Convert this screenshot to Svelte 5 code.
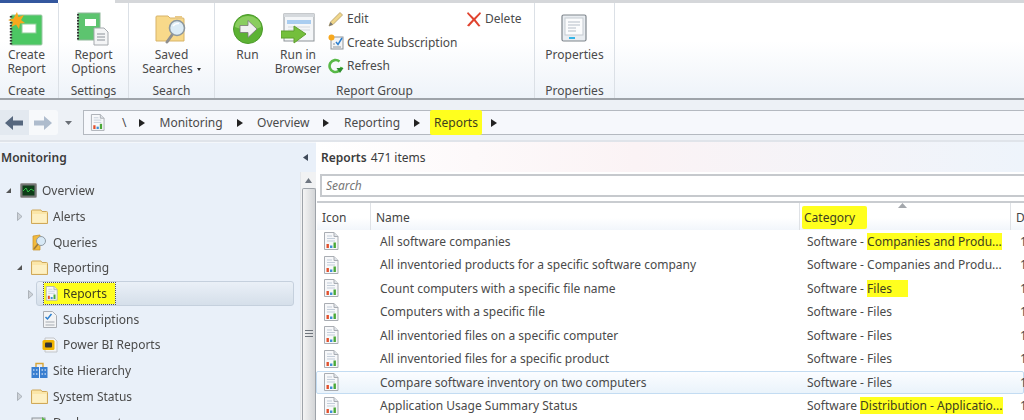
<script>
  const rows = [
    { name: 'All software companies', pre: 'Software - ', mark: 'Companies and Produ...' },
    { name: 'All inventoried products for a specific software company', pre: 'Software - Companies and Produ...' },
    { name: 'Count computers with a specific file name', pre: 'Software - ', mark: 'Files', wide: true },
    { name: 'Computers with a specific file', pre: 'Software - Files' },
    { name: 'All inventoried files on a specific computer', pre: 'Software - Files' },
    { name: 'All inventoried files for a specific product', pre: 'Software - Files' },
    { name: 'Compare software inventory on two computers', pre: 'Software - Files', hover: true },
    { name: 'Application Usage Summary Status', pre: 'Software ', mark: 'Distribution - Applicatio...' }
  ];
  const crumbs = ['Monitoring', 'Overview', 'Reporting'];
</script>

{#snippet arrowR()}
  <svg class="crumbarrow" viewBox="0 0 6 8" width="6" height="8"><path d="M0 0 L6 4 L0 8Z" fill="#222"/></svg>
{/snippet}

{#snippet reportIcon(size)}
  <svg viewBox="0 0 16 18" width={size} height={size * 18 / 16}>
    <path d="M1.5 .5 H11 L15 4.5 V17.5 H1.5Z" fill="#f7f8fa" stroke="#a9adb3"/>
    <path d="M11 .5 V4.5 H15" fill="#dfe3e8" stroke="#a9adb3"/>
    <path d="M4 4h5M4 6.5h8M4 9h8" stroke="#c3cdd9" stroke-width="1"/>
    <rect x="3.5" y="12" width="2.4" height="4" fill="#e2502c"/>
    <rect x="7" y="13.5" width="2.4" height="2.5" fill="#3f8fd6"/>
    <rect x="10.5" y="10.5" width="2.4" height="5.5" fill="#4aa838"/>
  </svg>
{/snippet}

{#snippet folder()}
  <svg viewBox="0 0 17 15" width="17" height="15">
    <path d="M.5 14.5 V2 Q.5 1 1.5 1 H10 L11 2.5 H15.5 Q16.5 2.5 16.5 3.5 V14.5Z" fill="#fbe6a8" stroke="#cfa85a"/>
    <path d="M1.5 13.5 V5 H15.5 V13.5Z" fill="#fdf0c4"/>
  </svg>
{/snippet}

{#snippet tw(dir)}
  {#if dir === 'open'}
    <svg class="tw" viewBox="0 0 7 7" width="7" height="7"><path d="M6 1 V6 H1Z" fill="#555"/></svg>
  {:else if dir === 'closed'}
    <svg class="tw" viewBox="0 0 7 9" width="7" height="9"><path d="M1.5 .5 L6 4.5 L1.5 8.5Z" fill="#cdd2d8" stroke="#9aa0a8" stroke-width=".7"/></svg>
  {:else}
    <span class="tw"></span>
  {/if}
{/snippet}

<div class="app">
  <div class="tabs">
    <div class="tab-blue"></div>
    <div class="tab-active"></div>
    <div class="tab-rest"></div>
  </div>

  <div class="ribbon">
    <section class="group g-create">
      <div class="items">
        <div class="big">
          <svg viewBox="0 0 36 34" width="36" height="34">
            <rect x="3" y="3" width="31" height="30" rx="1" fill="#4cc763" stroke="#9cc7a6"/>
            <path d="M3 4V33" stroke="#333" stroke-width="2.4" stroke-dasharray="1.5 1.5"/>
            <rect x="14" y="12" width="14" height="9" fill="#fff" stroke="#8fcf9a"/>
            <path d="M9 0 L10.5 5 L16 3 L13 8 L17 11 L12 11.5 L11 17 L8 12.5 L3.5 15 L5 10 L0 8 L5.5 6.5Z" fill="#f7a81e"/>
          </svg>
          <span class="lbl">Create<br />Report</span>
        </div>
      </div>
      <div class="glabel">Create</div>
    </section>

    <section class="group g-settings">
      <div class="items">
        <div class="big">
          <svg viewBox="0 0 32 34" width="32" height="34">
            <rect x="1" y="1" width="22" height="27" fill="#5dc46f" stroke="#8fb79a"/>
            <path d="M1 2V28" stroke="#333" stroke-width="2" stroke-dasharray="1.5 1.5"/>
            <rect x="8" y="7" width="11" height="7" fill="#fff"/>
            <path d="M17 16 H27 L31 20 V33 H17Z" fill="#f4f5f6" stroke="#a5a9ae"/>
            <path d="M20 22h8M20 25h8M20 28h8" stroke="#8b9299"/>
          </svg>
          <span class="lbl">Report<br />Options</span>
        </div>
      </div>
      <div class="glabel">Settings</div>
    </section>

    <section class="group g-search">
      <div class="items">
        <div class="big">
          <svg viewBox="0 0 34 34" width="34" height="34">
            <path d="M1 29 V5 Q1 4 2 4 H13 L15 6 H28 Q29 6 29 7 V29Z" fill="#f8d98a" stroke="#d7b368"/>
            <path d="M20 4 H27 V7 H20Z" fill="#e9c987"/>
            <path d="M17 23 L12 30" stroke="#8f8f8f" stroke-width="3" stroke-linecap="round"/>
            <circle cx="22" cy="16" r="7.5" fill="#dcecf6" stroke="#8d989f" stroke-width="1.6"/>
            <path d="M18 14 Q20 11 24 11.5" stroke="#fff" stroke-width="1.4" fill="none"/>
          </svg>
          <span class="lbl">Saved<br />Searches <i class="caret"></i></span>
        </div>
      </div>
      <div class="glabel">Search</div>
    </section>

    <section class="group g-report">
      <div class="items rg">
        <div class="big run">
          <svg viewBox="0 0 32 32" width="32" height="32">
            <circle cx="16" cy="16" r="14.5" fill="#5cb233" stroke="#4b9a2a"/>
            <path d="M3 14 A13 11 0 0 1 29 14 Q16 20 3 14Z" fill="#9ad56f" opacity=".75"/>
            <path d="M8 12.5 H16 V7.5 L25 16 L16 24.5 V19.5 H8Z" fill="#f1f1f1" stroke="#777" stroke-width=".8"/>
          </svg>
          <span class="lbl">Run</span>
        </div>
        <div class="big browser">
          <svg viewBox="0 0 34 32" width="34" height="32">
            <rect x="3" y="1" width="30" height="27" fill="#f4f6f8" stroke="#8e9499"/>
            <rect x="3" y="1" width="30" height="3" fill="#d5d9dd"/>
            <rect x="6" y="7" width="24" height="4" fill="#a9cdf0"/>
            <path d="M7 14h22M7 17h22" stroke="#d3d8de"/>
            <path d="M0 18 H13 V13 L25 21 L13 30 V25 H0Z" fill="#74bf3c" stroke="#5f9f2f"/>
          </svg>
          <span class="lbl">Run in<br />Browser</span>
        </div>
        <div class="smallcol">
          <div class="small">
            <svg viewBox="0 0 16 16" width="16" height="16"><path d="M1 15 L2.5 11 L12 1.5 L14.5 4 L5 13.5Z" fill="#f0d68a" stroke="#b19b63" stroke-width=".8"/><path d="M1 15 L2.5 11 L5 13.5Z" fill="#777"/></svg>
            <span>Edit</span>
          </div>
          <div class="small">
            <svg viewBox="0 0 16 16" width="16" height="16"><rect x="3" y="3" width="12" height="12" fill="#f3f4f5" stroke="#8e9499"/><path d="M8 8 L10 10.5 L14 4" stroke="#2b7fd0" stroke-width="1.5" fill="none"/><path d="M5 10h2M5 13h8" stroke="#8e9499"/><circle cx="3.5" cy="3.5" r="3" fill="#f7a81e"/></svg>
            <span>Create Subscription</span>
          </div>
          <div class="small">
            <svg viewBox="0 0 16 16" width="16" height="16"><path d="M13.5 9 A6 6 0 1 1 11.5 3.5" stroke="#58b947" stroke-width="2.6" fill="none"/><path d="M15.5 8 L8.5 8 L12 13Z" fill="#2f8f2f" transform="translate(0 2)"/></svg>
            <span>Refresh</span>
          </div>
        </div>
        <div class="small delete">
          <svg viewBox="0 0 16 16" width="16" height="16"><path d="M2 1 L8 7 L14 1 L15 2.5 L9.5 8.5 L14.5 15 L12.5 15.5 L8 10 L3 15.5 L1 14.5 L6.5 8.5 L1 2.5Z" fill="#e0432f"/></svg>
          <span>Delete</span>
        </div>
      </div>
      <div class="glabel">Report Group</div>
    </section>

    <section class="group g-props">
      <div class="items">
        <div class="big">
          <svg viewBox="0 0 26 28" width="26" height="28">
            <rect x="1" y="1" width="24" height="26" rx="1.5" fill="#e9edf1" stroke="#7e858c" stroke-width="1.2"/>
            <rect x="4" y="4" width="18" height="17" fill="#fbfcfd" stroke="#c5cbd1"/>
            <path d="M7 8h12M7 11h12M7 14h8M7 17h8" stroke="#b4bdc7"/>
            <rect x="8" y="23" width="6" height="2" fill="#35b4e6"/>
          </svg>
          <span class="lbl">Properties</span>
        </div>
      </div>
      <div class="glabel">Properties</div>
    </section>
  </div>

  <div class="nav">
    <div class="backfwd">
      <svg viewBox="0 0 18 14" width="18" height="14"><path d="M8 0 L0 7 L8 14 V9.5 H18 V4.5 H8Z" fill="#56677e"/></svg>
      <svg viewBox="0 0 18 14" width="18" height="14"><path d="M10 0 L18 7 L10 14 V9.5 H0 V4.5 H10Z" fill="#aebccd"/></svg>
    </div>
    <svg class="navdrop" viewBox="0 0 7 4" width="7" height="4"><path d="M0 0H7L3.5 4Z" fill="#6a6f76"/></svg>
    <div class="crumbs">
      <span class="crumbicon">{@render reportIcon(15)}</span>
      <span class="slash">\</span>
      {@render arrowR()}
      {#each crumbs as c}
        <span class="crumb">{c}</span>
        {@render arrowR()}
      {/each}
      <span class="crumb hl">Reports</span>
      {@render arrowR()}
    </div>
  </div>

  <div class="main">
    <aside class="left">
      <div class="lefthead">
        <strong>Monitoring</strong>
        <svg viewBox="0 0 5 7" width="5" height="7"><path d="M5 0V7L0 3.5Z" fill="#3f4a5a"/></svg>
      </div>
      <div class="leftbody">
        <div class="tree">
          <div class="node l0">
            {@render tw('open')}
            <svg viewBox="0 0 17 15" width="17" height="15"><rect x=".5" y=".5" width="16" height="14" rx="1" fill="#777" stroke="#999"/><rect x="2.5" y="2.5" width="12" height="10" fill="#0d3d18"/><path d="M3 8 L6 5 L8 9 L11 6 L14 8" stroke="#35c24a" fill="none"/></svg>
            <span>Overview</span>
          </div>
          <div class="node l1">
            {@render tw('closed')}
            {@render folder()}
            <span>Alerts</span>
          </div>
          <div class="node l1">
            {@render tw('none')}
            <svg viewBox="0 0 17 17" width="17" height="17"><path d="M2 16 V2 L9 1 V16Z" fill="#f1ba3e" stroke="#c78f25" stroke-width=".7"/><circle cx="10" cy="7" r="4.5" fill="#d8e9f6" stroke="#8f9aa3"/><path d="M7 10 L3 15" stroke="#a07b3a" stroke-width="1.6"/></svg>
            <span>Queries</span>
          </div>
          <div class="node l1">
            {@render tw('open')}
            {@render folder()}
            <span>Reporting</span>
          </div>
          <div class="node l2 selected">
            {@render tw('closed')}
            <span class="selwrap">
              {@render reportIcon(13)}
              <span class="sellabel">Reports</span>
            </span>
          </div>
          <div class="node l2">
            {@render tw('none')}
            <svg viewBox="0 0 15 17" width="16" height="17"><path d="M1 .5H10L14 4.5V16.5H1Z" fill="#f3f4f5" stroke="#a9adb3"/><path d="M3 6 L5 8 L9 3" stroke="#2b7fd0" stroke-width="1.5" fill="none"/><path d="M3 11h9M3 14h9" stroke="#a5abb2"/></svg>
            <span>Subscriptions</span>
          </div>
          <div class="node l2">
            {@render tw('none')}
            <svg viewBox="0 0 16 16" width="16" height="16"><path d="M3 1H12L15 4V15H3Z" fill="#f3f4f5" stroke="#c2c5c9"/><rect x=".5" y="3" width="12" height="10" rx="1.5" fill="#f0b400"/><rect x="3" y="5.5" width="7" height="5" rx="1" fill="#333"/></svg>
            <span>Power BI Reports</span>
          </div>
          <div class="node l1">
            {@render tw('none')}
            <svg viewBox="0 0 17 17" width="17" height="17"><path d="M5 5V1.5H12V5" stroke="#d9a63a" stroke-width="1.4" fill="none"/><rect x="0.5" y="5" width="7.5" height="11" fill="#3a7fd0"/><rect x="9" y="5" width="7.5" height="11" fill="#3a7fd0"/><path d="M2 8h1.5M5 8h1.5M2 12h1.5M5 12h1.5M10.5 8H12M13.5 8H15M10.5 12H12M13.5 12H15" stroke="#fff"/></svg>
            <span>Site Hierarchy</span>
          </div>
          <div class="node l1">
            {@render tw('closed')}
            {@render folder()}
            <span>System Status</span>
          </div>
          <div class="node l1">
            {@render tw('none')}
            <svg viewBox="0 0 17 15" width="17" height="15"><rect x="1" y="3" width="13" height="11" fill="#e4e7ea" stroke="#8e9499"/><path d="M4 5H11V2L16 6L11 10V7H4Z" fill="#5ab947"/></svg>
            <span>Deployments</span>
          </div>
        </div>
        <div class="scroll">
          <svg class="up" viewBox="0 0 7 5" width="7" height="5"><path d="M3.5 0L7 5H0Z" fill="#6f7680"/></svg>
          <div class="thumb"><i></i><i></i><i></i></div>
        </div>
      </div>
    </aside>

    <div class="right">
      <div class="righthead"><strong>Reports</strong> 471 items</div>
      <div class="searchwrap"><div class="search">Search</div></div>
      <div class="thead">
        <div class="th c-icon">Icon</div>
        <div class="th c-name">Name</div>
        <div class="th c-cat sorted">
          <svg class="sort" viewBox="0 0 9 5" width="9" height="5"><path d="M4.5 0L9 5H0Z" fill="#a3a7ac"/></svg>
          <span class="hl hlcat">Category</span>
        </div>
        <div class="th c-d">D</div>
      </div>
      {#each rows as r}
        <div class="tr" class:hover={r.hover}>
          <div class="c-icon td-icon">{@render reportIcon(16)}</div>
          <div class="c-name td">{r.name}</div>
          <div class="c-cat td cat">{r.pre}{#if r.mark}<span class="hl" class:wide={r.wide}>{r.mark}</span>{/if}</div>
          <div class="c-d td">1</div>
        </div>
      {/each}
    </div>
  </div>
</div>

<style>
  :global(body) { margin: 0; background: #fff; overflow: hidden; }
  .app {
    width: 1024px; height: 420px; overflow: hidden;
    font-family: "Noto Sans", "Open Sans", sans-serif; font-size: 12px; color: #4a4a4a;
    filter: blur(.4px); display: flex; flex-direction: column;
  }
  .tabs { height: 3px; display: flex; background: #fff; flex: none; }
  .tab-blue { width: 58px; background: #34579e; }
  .tab-active { width: 57px; background: #fff; }
  .tab-rest { flex: 1; background: #d5d7da; }

  .ribbon {
    height: 97px; flex: none; display: flex; box-sizing: border-box;
    background: linear-gradient(#fff 0%, #fff 40%, #eef3f9 100%);
    border-bottom: 2px solid #9ea3a9;
  }
  .group { display: flex; flex-direction: column; box-sizing: border-box; border-right: 1px solid #dbe0e6; }
  .g-create { width: 59px; padding-right: 5px; }
  .g-settings { width: 70px; }
  .g-search { width: 86px; }
  .g-report { width: 320px; }
  .g-props { width: 80px; }
  .items { flex: 1; display: flex; justify-content: center; min-height: 0; }
  .glabel { text-align: center; height: 14px; line-height: 14px; }
  .big { display: flex; flex-direction: column; align-items: center; padding-top: 9px; line-height: 14px; text-align: center; }
  .big svg { height: 34px; flex: none; }
  .lbl { display: block; margin-top: 2px; }
  .caret { display: inline-block; width: 0; height: 0; border: 2.5px solid transparent; border-top: 3px solid #333; border-bottom: 0; vertical-align: middle; margin-left: 1px; }
  .rg { justify-content: flex-start; }
  .run { width: 65px; }
  .browser { width: 48px; margin-left: -6px; }
  .smallcol { margin-left: 6px; padding-top: 4px; width: 138px; }
  .small { display: flex; align-items: center; gap: 3px; height: 23.5px; white-space: nowrap; }
  .delete { padding-top: 4px; }
  .g-props .big { padding-top: 8px; }
  .g-props .lbl { margin-top: 3px; }

  .nav {
    height: 42px; flex: none; box-sizing: border-box; display: flex; align-items: flex-start;
    background: #edf1f6; padding: 10px 0 5px 0; border-bottom: 2px solid #e0e4ea;
  }
  .backfwd { width: 58px; height: 25px; display: flex; align-items: center; gap: 11px; background: linear-gradient(90deg, #e3e9f0 0 50%, #f7f9fb 50%); border-radius: 0 3px 3px 0; box-sizing: border-box; padding: 0 0 0 5px; }
  .navdrop { margin: 11px 11px 0 7px; }
  .crumbs { flex: 1; height: 25px; display: flex; align-items: center; background: #f6f8fc; border: 1px solid #b4b9c0; border-right: 0; box-sizing: border-box; padding-left: 6px; }
  .crumbicon { display: flex; width: 20px; }
  .slash { margin-left: 12px; width: 17px; }
  .crumbarrow { flex: none; }
  .crumb { margin: 0 14px 0 14.5px; }
  .crumb.hl { margin: 0 9px 0 10px; padding: 4px; }
  .hl { background: #ffff1e; color: #3e3e20; border-radius: 2px; }

  .main { flex: 1; display: flex; min-height: 0; }
  .left { width: 316px; flex: none; background: #e9f0f9; display: flex; flex-direction: column; }
  .lefthead { height: 30px; flex: none; display: flex; align-items: center; justify-content: space-between; padding: 0 8px 0 1px; border-top: 1px solid #f4f7fb; box-sizing: border-box; }
  .lefthead strong { font-weight: 600; color: #3b3b3b; }
  .leftbody { flex: 1; display: flex; min-height: 0; }
  .tree { flex: 1; padding-top: 6px; min-width: 0; overflow: hidden; }
  .node { height: 25.7px; display: flex; align-items: center; gap: 5px; box-sizing: border-box; white-space: nowrap; }
  .node > .tw { flex: none; width: 9px; margin-right: 2px; display: block; }
  .l0 { padding-left: 4px; }
  .l1 { padding-left: 15px; }
  .l2 { padding-left: 26px; }
  .selected { background: linear-gradient(#eaf0f7, #d5dfea); border: 1px solid #c5d0dd; border-radius: 3px; margin: 0 6px 0 36px; padding-left: 7px; position: relative; }
  .selected > .tw { position: absolute; left: -11px; top: 8px; }
  .selwrap { display: flex; align-items: center; gap: 5px; background: #ffff1e; outline: 1px dotted #555; padding: 2px 0 2px 1px; color: #3e3e20; width: 71px; box-sizing: border-box; }
  .scroll { width: 16px; flex: none; background: #f1f2f3; display: flex; flex-direction: column; align-items: center; border-left: 1px solid #e3e6ea; box-sizing: border-box; }
  .up { margin: 6px 0 5px; }
  .thumb { flex: 1; width: 14px; box-sizing: border-box; border: 1px solid #9ea3a9; border-bottom: 0; border-radius: 2px 2px 0 0; background: linear-gradient(90deg, #f4f4f4, #d3d5d7); display: flex; flex-direction: column; align-items: center; gap: 2px; padding-top: 141px; }
  .thumb i { display: block; width: 8px; height: 1px; background: #6f757c; }

  .right { flex: 1; min-width: 0; display: flex; flex-direction: column; background: #fff; }
  .righthead { height: 30px; flex: none; display: flex; align-items: center; gap: 4px; padding-left: 5px; box-sizing: border-box; background: linear-gradient(90deg, #fff, #fbf3f5 45%, #eef4fb); color: #3b3b3b; }
  .righthead strong { font-weight: 600; }
  .searchwrap { padding: 2px 0 0 4px; background: #fff; flex: none; }
  .search { height: 23px; box-sizing: border-box; border: 2px solid #c6c9cd; border-right: 0; font-style: italic; line-height: 19px; padding-left: 4px; color: #777; }
  .thead { display: flex; height: 28.5px; margin-top: 4px; border-top: 2px solid #c9ccd0; flex: none; background: linear-gradient(#fff 55%, #f2f6fb); box-sizing: border-box; margin-left: 1px; }
  .th { box-sizing: border-box; padding-top: 7px; line-height: 16px; border-right: 1px solid #dfe2e6; position: relative; color: #444; }
  .c-icon { width: 54px; flex: none; box-sizing: border-box; padding-left: 5px; }
  .c-name { width: 429px; flex: none; box-sizing: border-box; padding-left: 5px; }
  .c-cat { width: 211px; flex: none; box-sizing: border-box; padding-left: 5px; }
  .c-d { flex: 1; box-sizing: border-box; padding-left: 5px; border-right: 0; }
  .sort { position: absolute; left: 98px; top: 0; }
  .hlcat { padding: 3px 12px 3px 2px; margin-left: -3px; }
  .tr { display: flex; height: 23.5px; align-items: center; box-sizing: border-box; margin-left: 1px; white-space: nowrap; color: #4a4a4a; }
  .tr.hover { border: 1px solid #c3dcf2; border-radius: 2px; background: linear-gradient(#fbfdff, #eaf3fb); margin-left: 0; }
  .td-icon { display: flex; align-items: center; padding-left: 6px; }
  .td { padding-left: 9px; }
  .cat { padding-left: 7px; overflow: hidden; }
  .cat .hl { padding: 3px 0; }
  .cat .hl.wide { padding-right: 16px; }
</style>
